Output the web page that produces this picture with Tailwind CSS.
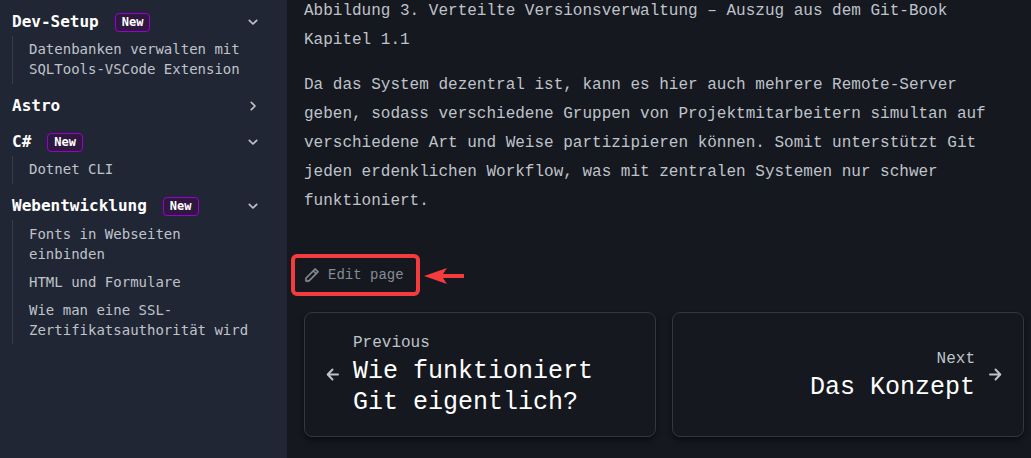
<!DOCTYPE html>
<html lang="de">
<head>
<meta charset="utf-8">
<meta name="viewport" content="width=device-width, initial-scale=1">
<title>Verteilte Versionsverwaltung</title>
<script src="https://cdn.jsdelivr.net/npm/@tailwindcss/browser@4"></script>
</head>
<body class="flex min-h-screen bg-[#15181f] font-['Liberation_Mono',monospace] text-[#bfc3ca]">
<nav aria-label="Dokumentation" class="flex w-[287px] shrink-0 flex-col gap-2 bg-[#212634] pt-2 pr-6 pl-3 font-['DejaVu_Sans_Mono',monospace]">
  <section>
    <button class="flex h-7 w-full items-center text-left text-base font-bold text-white">Dev-Setup<span class="ml-4 rounded border border-[#9a00d1] bg-[#2f1740] px-1.5 text-xs leading-[17px]">New</span>
      <svg class="ml-auto size-5" viewBox="0 0 20 20" fill="none" stroke="#c0c2c7" stroke-width="1.7" stroke-linecap="round" stroke-linejoin="round"><path d="m6.300 8.300 3.700 3.700 3.700-3.700"/></svg></button>
    <ul class="border-l border-[#373b4a] pr-1 pl-4 text-sm leading-5">
      <li class="pt-[3px] pb-[5px]"><a href="#">Datenbanken verwalten mit SQLTools-VSCode Extension</a></li>
    </ul>
  </section>
  <section>
    <button class="flex h-7 w-full items-center text-left text-base font-bold text-white">Astro
      <svg class="ml-auto size-5" viewBox="0 0 20 20" fill="none" stroke="#c0c2c7" stroke-width="1.7" stroke-linecap="round" stroke-linejoin="round"><path d="m8.300 6.300 3.700 3.700-3.700 3.700"/></svg></button>
  </section>
  <section>
    <button class="flex h-7 w-full items-center text-left text-base font-bold text-white">C#<span class="ml-4 rounded border border-[#9a00d1] bg-[#2f1740] px-1.5 text-xs leading-[17px]">New</span>
      <svg class="ml-auto size-5" viewBox="0 0 20 20" fill="none" stroke="#c0c2c7" stroke-width="1.7" stroke-linecap="round" stroke-linejoin="round"><path d="m6.300 8.300 3.700 3.700 3.700-3.700"/></svg></button>
    <ul class="border-l border-[#373b4a] pr-1 pl-4 text-sm leading-5">
      <li class="pt-[3px] pb-[5px]"><a href="#">Dotnet CLI</a></li>
    </ul>
  </section>
  <section>
    <button class="flex h-7 w-full items-center text-left text-base font-bold text-white">Webentwicklung<span class="ml-4 rounded border border-[#9a00d1] bg-[#2f1740] px-1.5 text-xs leading-[17px]">New</span>
      <svg class="ml-auto size-5" viewBox="0 0 20 20" fill="none" stroke="#c0c2c7" stroke-width="1.7" stroke-linecap="round" stroke-linejoin="round"><path d="m6.300 8.300 3.700 3.700 3.700-3.700"/></svg></button>
    <ul class="border-l border-[#373b4a] pr-1 pl-4 text-sm leading-5">
      <li class="py-1"><a href="#">Fonts in Webseiten einbinden</a></li>
      <li class="py-1"><a href="#">HTML und Formulare</a></li>
      <li class="py-1"><a href="#">Wie man eine SSL-Zertifikatsauthorität wird</a></li>
    </ul>
  </section>
</nav>
<main class="-mt-[3px] min-w-0 flex-1 pr-[7px] pl-[17px]">
  <div class="max-w-[73ch] space-y-4 text-base leading-[29px]">
    <p>Abbildung 3. Verteilte Versionsverwaltung – Auszug aus dem Git-Book Kapitel 1.1</p>
    <p>Da das System dezentral ist, kann es hier auch mehrere Remote-Server geben, sodass verschiedene Gruppen von Projektmitarbeitern simultan auf verschiedene Art und Weise partizipieren können. Somit unterstützt Git jeden erdenklichen Workflow, was mit zentralen Systemen nur schwer funktioniert.</p>
  </div>
  <div class="mt-[38px] -ml-[13px] flex items-center gap-1">
    <a href="#" class="flex h-[42px] w-[129px] items-center gap-2 rounded-md border-4 border-[#f43b3d] pl-[9px] text-sm whitespace-nowrap text-[#888b96]">
      <svg class="size-4 shrink-0" viewBox="0 0 24 24" fill="#888b96" stroke="#888b96" stroke-width=".6"><path d="M22 7.240a1 1 0 0 0-.290-.710l-4.240-4.240a1 1 0 0 0-1.420 0l-2.830 2.830L2.290 16.050a1 1 0 0 0-.290.710V21a1 1 0 0 0 1 1h4.240a1 1 0 0 0 .760-.290l10.870-10.930L21.710 8a1.190 1.190 0 0 0 .290-.760ZM6.830 20H4v-2.830l9.930-9.930 2.830 2.830L6.830 20ZM18.170 8.660l-2.830-2.830 1.420-1.410 2.820 2.820-1.410 1.420Z"/></svg>
      Edit page</a>
    <svg class="mt-[2px] h-4 w-10" viewBox="0 0 40 16" fill="#f43b3d" aria-hidden="true"><path d="M0 8 23 0 19 6h21v4H19l4 6Z"/></svg>
  </div>
  <div class="mt-4 grid grid-cols-2 gap-4 leading-[25px]">
    <a href="#" rel="prev" class="flex min-h-[125px] items-center gap-[10px] rounded-lg border border-[#333644] px-[18px] shadow-md shadow-black/40">
      <svg class="size-5 shrink-0" viewBox="0 0 20 20" fill="none" stroke="#c0c2c7" stroke-width="2" stroke-linecap="round" stroke-linejoin="round"><path d="M15 9.500H5.200M9.500 4.500l-4.800 5 4.800 5"/></svg>
      <span class="max-w-[250px]">Previous<br><span class="block text-[25px] leading-[31px] text-white">Wie funktioniert Git eigentlich?</span></span>
    </a>
    <a href="#" rel="next" class="flex min-h-[125px] items-center justify-end gap-[10px] rounded-lg border border-[#333644] px-[18px] text-right shadow-md shadow-black/40">
      <span>Next<br><span class="block text-[25px] leading-[31px] text-white">Das Konzept</span></span>
      <svg class="size-5 shrink-0" viewBox="0 0 20 20" fill="none" stroke="#c0c2c7" stroke-width="2" stroke-linecap="round" stroke-linejoin="round"><path d="M5 9.500h9.800M10.500 4.500l4.800 5-4.800 5"/></svg>
    </a>
  </div>
</main>
</body>
</html>
